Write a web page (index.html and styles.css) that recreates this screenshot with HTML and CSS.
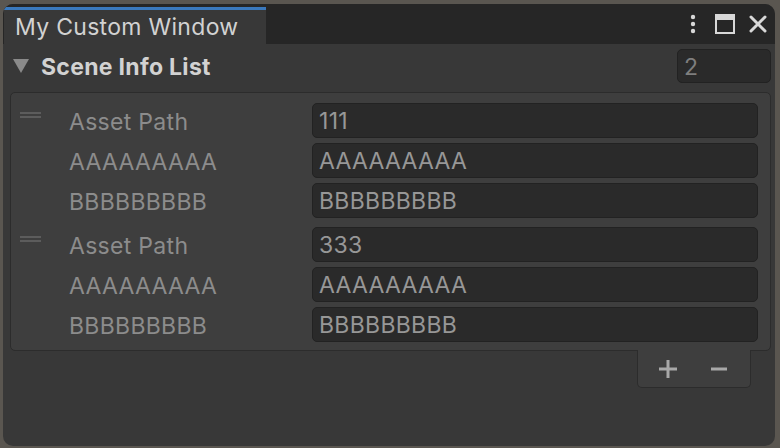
FILE: index.html
```html
<!DOCTYPE html>
<html>
<head>
<meta charset="utf-8">
<link rel="stylesheet" href="styles.css">
</head>
<body>
<div class="window">
  <div class="tabbar">
    <div class="tab">My Custom Window</div>
    <div class="win-icons">
      <svg class="ico" width="10" height="22" viewBox="0 0 10 22"><circle cx="5" cy="4" r="2.2" fill="#d8d8d8"/><circle cx="5" cy="11" r="2.2" fill="#d8d8d8"/><circle cx="5" cy="18" r="2.2" fill="#d8d8d8"/></svg>
      <svg class="ico" width="22" height="22" viewBox="0 0 22 22"><rect x="2" y="2" width="18" height="18" fill="none" stroke="#d8d8d8" stroke-width="2"/><rect x="2" y="2" width="18" height="5" fill="#d8d8d8"/></svg>
      <svg class="ico" width="20" height="20" viewBox="0 0 20 20"><path d="M3 3 L17 17 M17 3 L3 17" stroke="#d8d8d8" stroke-width="3" stroke-linecap="round"/></svg>
    </div>
  </div>
  <div class="content">
    <div class="header">
      <span class="tri"></span>
      <span class="title">Scene Info List</span>
      <div class="count">2</div>
    </div>
    <div class="list">
      <div class="element">
        <span class="handle"></span>
        <div class="row"><span class="label">Asset Path</span><div class="field">111</div></div>
        <div class="row"><span class="label">AAAAAAAAA</span><div class="field">AAAAAAAAA</div></div>
        <div class="row"><span class="label">BBBBBBBBB</span><div class="field">BBBBBBBBB</div></div>
      </div>
      <div class="element">
        <span class="handle"></span>
        <div class="row"><span class="label">Asset Path</span><div class="field">333</div></div>
        <div class="row"><span class="label">AAAAAAAAA</span><div class="field">AAAAAAAAA</div></div>
        <div class="row"><span class="label">BBBBBBBBB</span><div class="field">BBBBBBBBB</div></div>
      </div>
    </div>
    <div class="footer-wrap">
      <div class="footer">
        <svg class="btn plus" width="22" height="22" viewBox="0 0 22 22"><path d="M11 2 V20 M2 11 H20" stroke="#a8a8a8" stroke-width="3"/></svg>
        <svg class="btn minus" width="18" height="22" viewBox="0 0 18 22"><path d="M1 11 H17" stroke="#a8a8a8" stroke-width="3"/></svg>
      </div>
    </div>
  </div>
</div>
</body>
</html>
```

FILE: styles.css
```css
html, body {
  margin: 0;
  padding: 0;
  background: #5a5650;
  width: 780px;
  height: 448px;
  overflow: hidden;
  font-family: Inter, "Liberation Sans", sans-serif;
}
.window {
  margin: 4px 0 0 3px;
  width: 772px;
  height: 442px;
  background: #383838;
  border-radius: 10px;
  overflow: hidden;
  display: flex;
  flex-direction: column;
}
.tabbar {
  height: 40px;
  background: #262626;
  display: flex;
  align-items: flex-start;
  flex: none;
}
.tab {
  margin: 3px 0 0 1px;
  width: 251px;
  height: 34px;
  padding-left: 11px;
  background: #383838;
  border-top: 3px solid #3a79bd;
  color: #d2d2d2;
  font-size: 23px;
  letter-spacing: 0.3px;
  line-height: 35px;
}
.win-icons {
  margin-left: auto;
  margin-right: 7px;
  margin-top: 9px;
  display: flex;
  align-items: center;
}
.ico { display: block; }
.win-icons .ico:nth-child(1) { margin-right: 16px; }
.win-icons .ico:nth-child(2) { margin-right: 12px; }
.content {
  padding: 5px 4px 0 7px;
  display: flex;
  flex-direction: column;
}
.header {
  height: 34px;
  display: flex;
  align-items: center;
}
.tri {
  margin-left: 3px;
  width: 0;
  height: 0;
  border-left: 8px solid transparent;
  border-right: 8px solid transparent;
  border-top: 14px solid #8a8a8a;
}
.title {
  margin-left: 12px;
  color: #d2d2d2;
  font-weight: 700;
  font-size: 23px;
  letter-spacing: 0.3px;
  padding-top: 2px;
}
.count {
  margin-left: auto;
  width: 86px;
  height: 32px;
  padding-left: 6px;
  background: #2a2a2a;
  border: 1px solid #222;
  border-radius: 5px;
  color: #7e7e7e;
  font-size: 23px;
  line-height: 34px;
}
.list {
  margin-top: 9px;
  background: #3e3e3e;
  border: 1px solid #2c2c2c;
  border-radius: 5px;
  padding: 10px 12px 8px 0;
  display: flex;
  flex-direction: column;
  gap: 9px;
}
.element {
  position: relative;
  display: flex;
  flex-direction: column;
  gap: 5px;
}
.handle {
  position: absolute;
  left: 9px;
  top: 9px;
  width: 21px;
  height: 6px;
  border-top: 2px solid #5c5c5c;
  border-bottom: 2px solid #5c5c5c;
  box-sizing: border-box;
}
.row {
  height: 35px;
  display: flex;
  align-items: center;
}
.label {
  width: 243px;
  padding-left: 58px;
  flex: none;
  color: #8c8c8c;
  font-size: 23px;
  letter-spacing: 0.3px;
  padding-top: 2px;
}
.field {
  flex: 1;
  height: 33px;
  padding-left: 6px;
  background: #2a2a2a;
  border: 1px solid #222;
  border-radius: 5px;
  color: #979797;
  font-size: 23px;
  letter-spacing: 0.3px;
  line-height: 35px;
}
.footer-wrap {
  display: flex;
  justify-content: flex-end;
  padding-right: 20px;
  margin-top: -1px;
}
.footer {
  width: 112px;
  height: 37px;
  background: #3e3e3e;
  border: 1px solid #2c2c2c;
  border-top: none;
  border-radius: 0 0 5px 5px;
  display: flex;
  align-items: center;
}
.btn { display: block; }
.btn.plus { margin-left: 19px; }
.btn.minus { margin-left: 31px; }
```
